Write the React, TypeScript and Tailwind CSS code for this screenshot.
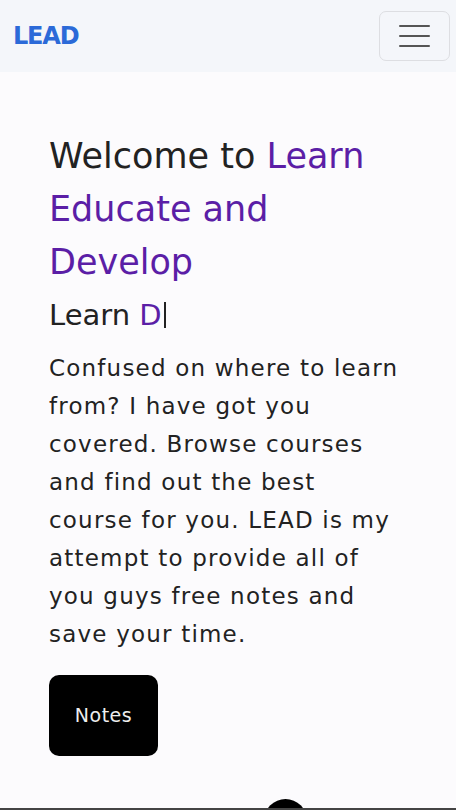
export default function App() {
  return (
    <div className="relative h-[810px] w-full overflow-hidden bg-[#fcfbfd] font-['DejaVu_Sans',sans-serif]">
      <nav className="flex h-[72px] items-center justify-between bg-[#f4f6fa] pl-[13px] pr-[6px]">
        <span className="text-[24px] font-bold tracking-[-1.2px] text-[#2b6ad8]">LEAD</span>
        <button className="flex h-[50px] w-[71px] flex-col items-center justify-center gap-[8px] rounded-[7px] border border-[#dddee2]">
          <span className="h-[2px] w-[31px] rounded bg-[#555]" />
          <span className="h-[2px] w-[31px] rounded bg-[#555]" />
          <span className="h-[2px] w-[31px] rounded bg-[#555]" />
        </button>
      </nav>

      <main className="px-[49px] pt-[58px]">
        <h1 className="text-[35px] leading-[53px] text-[#222]">
          Welcome to <span className="text-[#5b1ea6]">Learn Educate and Develop</span>
        </h1>
        <h2 className="mt-[4px] text-[29px] leading-[44px] text-[#222]">
          Learn <span className="text-[#5b1ea6]">D</span>
          <span className="ml-[2px] inline-block h-[26px] w-[2px] translate-y-[3px] bg-[#222]" />
        </h2>
        <p className="mt-[12px] text-[23px] leading-[38px] tracking-[1.2px] text-[#222]">
          Confused on where to learn from? I have got you covered. Browse courses and find out the best course for you. LEAD is my attempt to provide all of you guys free notes and save your time.
        </p>
        <button className="mt-[22px] flex h-[81px] w-[109px] items-center justify-center rounded-[10px] bg-black text-[19px] tracking-[0.5px] text-[#eee]">
          Notes
        </button>
      </main>

      <div className="absolute bottom-[-32px] left-[264px] h-[43px] w-[43px] rounded-full bg-black" />
      <div className="absolute bottom-0 left-0 h-[2px] w-full bg-[#444]" />
    </div>
  )
}
